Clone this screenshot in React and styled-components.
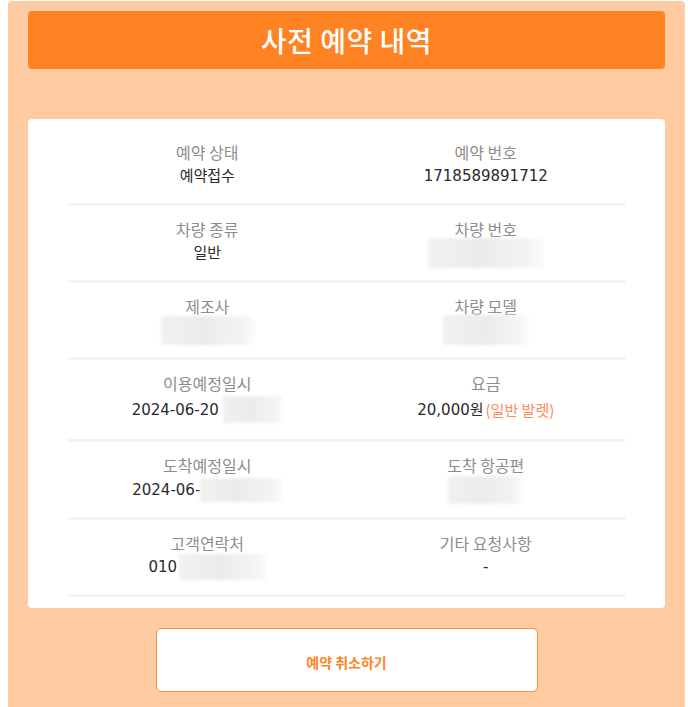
import React from 'react';
import styled, { createGlobalStyle } from 'styled-components';

const Global = createGlobalStyle`
  body {
    margin: 0;
    background: #ffffff;
    font-family: "Noto Sans CJK KR", "Noto Sans", sans-serif;
  }
`;

const Page = styled.div`
  padding: 1px 3px 0 8px;
`;

const Panel = styled.div`
  background-color: #ffcba3;
  border-radius: 4px 4px 0 0;
  padding: 10px 20px 16px;
`;

const Header = styled.div`
  height: 58px;
  background-color: #ff8322;
  border-radius: 4px;
  display: flex;
  align-items: center;
  justify-content: center;
  color: white;
  font-size: 28px;
  font-weight: 500;
  letter-spacing: 0.5px;
`;

const Card = styled.div`
  margin-top: 50px;
  background: white;
  border-radius: 4px;
  padding: 10px 40px 11px;
`;

const Row = styled.div`
  display: grid;
  grid-template-columns: 1fr 1fr;
  align-items: center;
  padding: 12px 0 16px;
  border-bottom: 3px solid #f0f3ef;
`;

const Cell = styled.div`
  display: flex;
  flex-direction: column;
  align-items: center;
  gap: 2px;
`;

const Label = styled.div`
  font-size: 16px;
  line-height: 22px;
  color: #8d8d8d;
`;

const Value = styled.div`
  font-family: "DejaVu Sans", "Noto Sans CJK KR", sans-serif;
  font-size: 15px;
  line-height: 22px;
  color: #2a2a2a;
  display: flex;
  align-items: center;
  min-height: ${p => p.vh || 22}px;
`;

const Note = styled.span`
  font-family: "Noto Sans CJK KR", sans-serif;
  color: #ff8c55;
  margin-left: 2px;
`;

const Blur = styled.span`
  display: inline-block;
  width: ${p => p.w}px;
  height: ${p => p.h}px;
  margin: ${p => -(p.h - 22) / 2}px 0 ${p => -(p.h - 22) / 2}px ${p => p.gap || 0}px;
  background: linear-gradient(90deg, #f1f1f1 0%, #ebebeb 45%, #f3f3f3 85%, #fafafa 100%);
  filter: blur(1.5px);
`;

const Button = styled.button`
  display: block;
  margin: 20px auto 0;
  width: 382px;
  height: 64px;
  background: white;
  border: 1px solid #ff8a2a;
  border-radius: 5px;
  color: #ff8322;
  font-family: "Noto Sans CJK KR", sans-serif;
  font-size: 14px;
  font-weight: 700;
  padding-top: 4px;
`;

const rows = [
  [
    { label: '예약 상태', value: '예약접수' },
    { label: '예약 번호', value: '1718589891712' },
  ],
  [
    { label: '차량 종류', value: '일반' },
    { label: '차량 번호', blur: 115, h: 30 },
  ],
  [
    { label: '제조사', blur: 93, h: 29 },
    { label: '차량 모델', blur: 85, h: 30 },
  ],
  [
    { label: '이용예정일시', value: '2024-06-20', blur: 60, h: 27, vh: 27, gap: 4 },
    { label: '요금', value: '20,000원', note: '(일반 발렛)', vh: 27 },
  ],
  [
    { label: '도착예정일시', value: '2024-06-', blur: 82, h: 24, vh: 23 },
    { label: '도착 항공편', blur: 75, h: 28, vh: 23 },
  ],
  [
    { label: '고객연락처', value: '010', blur: 87, h: 26, gap: 2 },
    { label: '기타 요청사항', value: '-' },
  ],
];

export default function App() {
  return (
    <Page>
      <Global />
      <Panel>
        <Header>사전 예약 내역</Header>
        <Card>
          {rows.map((row, i) => (
            <Row key={i}>
              {row.map(c => (
                <Cell key={c.label}>
                  <Label>{c.label}</Label>
                  <Value vh={c.vh}>
                    {c.value}
                    {c.note && <Note>{c.note}</Note>}
                    {c.blur && <Blur w={c.blur} h={c.h} gap={c.gap} />}
                  </Value>
                </Cell>
              ))}
            </Row>
          ))}
        </Card>
        <Button>예약 취소하기</Button>
      </Panel>
    </Page>
  );
}
